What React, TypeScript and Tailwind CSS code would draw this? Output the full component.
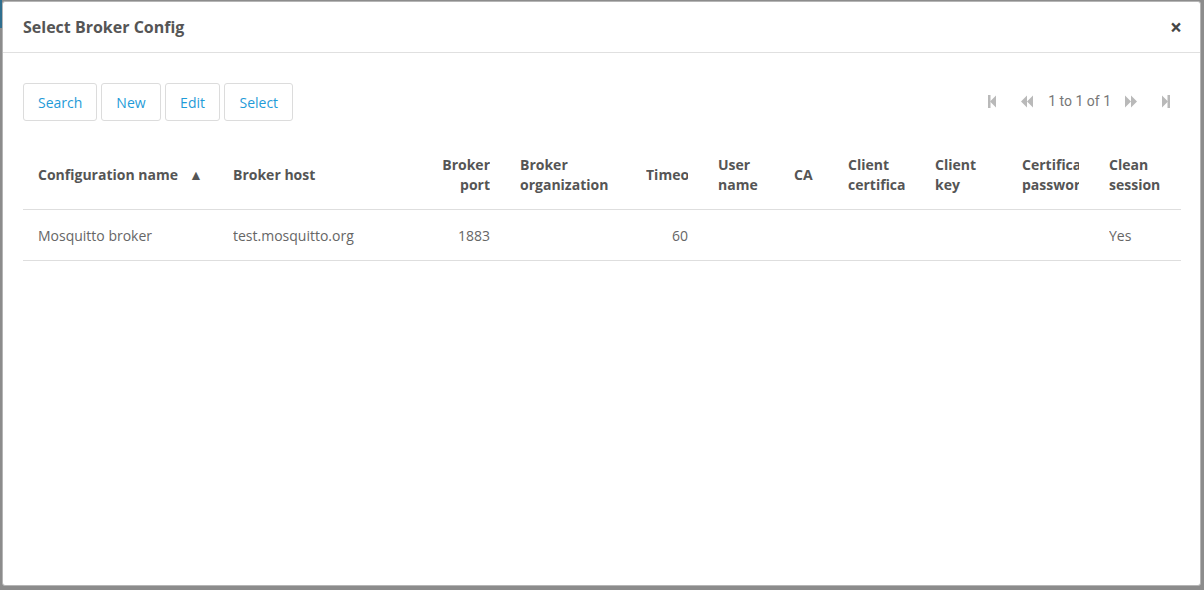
import React from 'react';

const columns = [
  { label: 'Configuration name', width: 195, sort: true },
  { label: 'Broker host', width: 202 },
  { label: 'Broker port', width: 85, right: true },
  { label: 'Broker organization', width: 126 },
  { label: 'Timeout', width: 72, right: true },
  { label: 'User name', width: 76 },
  { label: 'CA', width: 54 },
  { label: 'Client certificate', width: 87 },
  { label: 'Client key', width: 87 },
  { label: 'Certificate password', width: 87 },
  { label: 'Clean session', width: 87 },
];

const rows = [
  ['Mosquitto broker', 'test.mosquitto.org', '1883', '', '60', '', '', '', '', '', 'Yes'],
];

function FirstIcon() {
  return (
    <svg width="8" height="13" viewBox="0 0 8 13" className="fill-[#b9b9b9]">
      <rect x="0" y="0" width="2.5" height="13" />
      <path d="M2 6.5 L8 0.5 L8 12.5 Z" />
    </svg>
  );
}

function PrevIcon() {
  return (
    <svg width="12" height="13" viewBox="0 0 12 13" className="fill-[#b9b9b9]">
      <path d="M0 6.5 L6 0.5 L6 12.5 Z" />
      <path d="M6 6.5 L12 0.5 L12 12.5 Z" />
    </svg>
  );
}

function NextIcon() {
  return (
    <svg width="12" height="13" viewBox="0 0 12 13" className="fill-[#b9b9b9]">
      <path d="M0 0.5 L6 6.5 L0 12.5 Z" />
      <path d="M6 0.5 L12 6.5 L6 12.5 Z" />
    </svg>
  );
}

function LastIcon() {
  return (
    <svg width="8" height="13" viewBox="0 0 8 13" className="fill-[#b9b9b9]">
      <path d="M0 0.5 L6 6.5 L0 12.5 Z" />
      <rect x="5.5" y="0" width="2.5" height="13" />
    </svg>
  );
}

export default function App() {
  const buttons = ['Search', 'New', 'Edit', 'Select'];

  return (
    <div
      className="relative w-[1204px] h-[590px] overflow-hidden bg-[#8c8c8c] pt-[1px] pl-[2px]"
      style={{ fontFamily: '"Open Sans", Arial, sans-serif' }}
    >
      <div className="absolute left-0 top-0 w-[2px] h-[28px] bg-[#2f6f8f]" />
      <div className="w-[1199px] h-[585px] bg-white border border-[#b5b5b5] rounded-[3px] flex flex-col">
        <div className="flex items-center justify-between h-[51px] px-[20px] border-b border-[#e0e0e0]">
          <h1 className="text-[16px] font-bold text-[#555]">Select Broker Config</h1>
          <button className="text-[21px] leading-none font-bold text-[#333] opacity-90 mr-[-2px]">×</button>
        </div>

        <div className="px-[20px] pt-[30px]">
          <div className="flex items-center justify-between">
            <div className="flex gap-[4px]">
              {buttons.map((b) => (
                <button
                  key={b}
                  className={`h-[38px] text-[14px] text-[#1f9bd8] bg-white border border-[#dcdcdc] rounded-[3px] ${
                    b === 'Edit' ? 'px-[14.5px]' : 'px-[14px]'
                  }`}
                >
                  {b}
                </button>
              ))}
            </div>
            <div className="flex items-center mr-[10px] mt-[-2px]">
              <span className="mr-[25px] flex"><FirstIcon /></span>
              <span className="mr-[15px] flex"><PrevIcon /></span>
              <span
                className="text-[14px] text-[#777]"
                style={{ fontFamily: 'Roboto, Arial, sans-serif' }}
              >
                1 to 1 of 1
              </span>
              <span className="ml-[14px] flex"><NextIcon /></span>
              <span className="ml-[25px] flex"><LastIcon /></span>
            </div>
          </div>

          <table className="table-fixed border-collapse mt-[19px] w-[1158px] text-[14px]">
            <colgroup>
              {columns.map((c) => (
                <col key={c.label} style={{ width: c.width }} />
              ))}
            </colgroup>
            <thead>
              <tr className="border-b border-[#dedede]">
                {columns.map((c) => (
                  <th
                    key={c.label}
                    className={`px-[15px] pt-[15px] pb-[13px] h-[69px] align-middle font-bold text-[#555] leading-[20px] ${
                      c.right ? 'text-right' : 'text-left'
                    }`}
                  >
                    <div className="overflow-hidden">
                      {c.label}
                      {c.sort && <span className="ml-[11px] text-[14px]">▲</span>}
                    </div>
                  </th>
                ))}
              </tr>
            </thead>
            <tbody>
              {rows.map((r, i) => (
                <tr key={i} className="border-b border-[#dedede]">
                  {r.map((v, j) => (
                    <td
                      key={j}
                      className={`px-[15px] pt-[16px] pb-[14px] align-middle text-[#666] leading-[20px] ${
                        columns[j].right ? 'text-right' : 'text-left'
                      }`}
                    >
                      <div className="overflow-hidden whitespace-nowrap">{v}</div>
                    </td>
                  ))}
                </tr>
              ))}
            </tbody>
          </table>
        </div>
      </div>
    </div>
  );
}
